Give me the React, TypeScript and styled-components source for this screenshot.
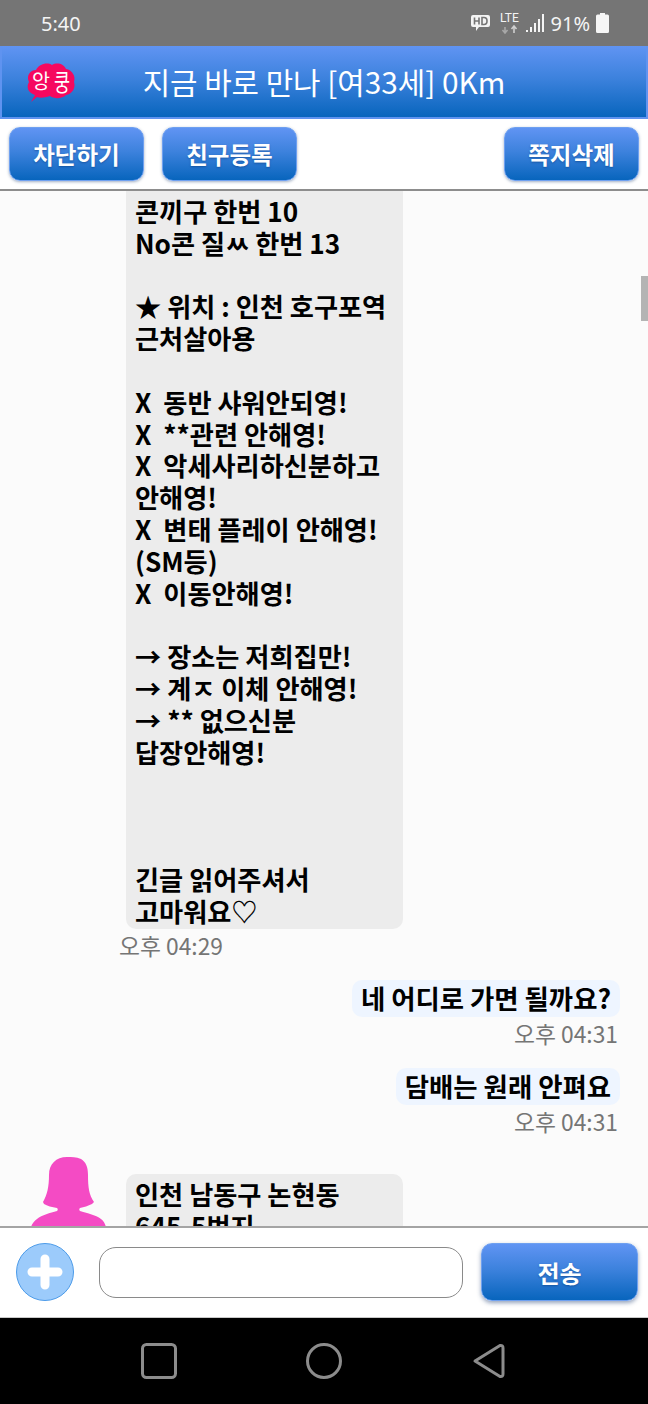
import styled, { createGlobalStyle } from "styled-components";

const GlobalStyle = createGlobalStyle`
  html, body {
    margin: 0;
    padding: 0;
    background: #000;
  }
  * {
    box-sizing: border-box;
  }
`;

const FONT = `"Noto Sans CJK KR", "Noto Sans", sans-serif`;
const BLUE = "linear-gradient(180deg, #6094f3 0%, #3d82dd 45%, #0865bd 100%)";

const Screen = styled.div`
  width: 648px;
  height: 1404px;
  display: flex;
  flex-direction: column;
  font-family: ${FONT};
  position: relative;
  overflow: hidden;
`;

const StatusBar = styled.div`
  height: 46px;
  flex: none;
  background: #757575;
  color: #f4f4f4;
  display: flex;
  align-items: center;
  justify-content: space-between;
  padding: 0 39px 0 41px;
  font-family: "Noto Sans", sans-serif;
  font-size: 20px;
`;

const StatusRight = styled.div`
  display: flex;
  align-items: center;
  gap: 6px;
`;

const Header = styled.div`
  height: 73px;
  flex: none;
  background: ${BLUE};
  border: 2px solid #5f93f0;
  border-top: none;
  display: grid;
  grid-template-columns: 1fr auto 1fr;
  align-items: center;
`;

const LogoWrap = styled.div`
  margin-left: 24px;
  margin-top: 2px;
`;

const Title = styled.div`
  color: #fff;
  font-size: 29.8px;
  line-height: 1;
  white-space: nowrap;
`;

const Toolbar = styled.div`
  height: 72px;
  flex: none;
  background: #fff;
  border-bottom: 2px solid #8d8d8d;
  display: flex;
  align-items: flex-start;
  gap: 18px;
  padding: 8px 9px 0;
`;

const BlueButton = styled.button<{ $right?: boolean }>`
  width: 135px;
  height: 54px;
  flex: none;
  margin-left: ${(p) => (p.$right ? "auto" : "0")};
  padding: 0;
  border: 1px solid #6ea0f0;
  border-radius: 11px;
  background: ${BLUE};
  box-shadow: 0 1px 3px rgba(40, 70, 120, 0.45);
  color: #fff;
  font-family: ${FONT};
  font-size: 23.5px;
  font-weight: 700;
  text-shadow: 0 1px 2px rgba(0, 40, 100, 0.4);
`;

const Chat = styled.div`
  flex: 1;
  min-height: 0;
  overflow: hidden;
  background: #fbfbfb;
  position: relative;
`;

const ScrollThumb = styled.div`
  position: absolute;
  top: 85px;
  right: 0;
  width: 7px;
  height: 45px;
  background: #b4b4b4;
`;

const LeftRow = styled.div`
  display: flex;
  align-items: flex-start;
  padding-left: 126px;
`;

const AvatarRow = styled.div`
  display: flex;
  align-items: flex-start;
  gap: 20px;
  padding-left: 30px;
  margin-top: 20px;
`;

const RightRow = styled.div`
  display: flex;
  justify-content: flex-end;
  padding-right: 28px;
  margin-top: 19px;
`;

const Bubble = styled.div<{ $clipped?: boolean; $offset?: number }>`
  width: 277px;
  flex: none;
  background: #ececec;
  border-radius: ${(p) => (p.$clipped ? "0 0 10px 10px" : "10px")};
  padding: ${(p) => (p.$clipped ? "5px 9px 2px" : "5px 9px")};
  margin-top: ${(p) => p.$offset ?? 0}px;
  color: #000;
  font-size: 26.2px;
  font-weight: 700;
  line-height: 31.8px;
  white-space: pre;
`;

const SentBubble = styled.div`
  background: #eef5ff;
  border-radius: 10px;
  height: 37px;
  padding: 0 9px;
  color: #000;
  font-size: 26.4px;
  font-weight: 700;
  line-height: 35px;
  white-space: pre;
`;

const Time = styled.div<{ $left?: boolean }>`
  color: #757575;
  font-size: 22.8px;
  line-height: 31px;
  padding-top: 1px;
  padding-left: ${(p) => (p.$left ? "119px" : "0")};
  padding-right: ${(p) => (p.$left ? "0" : "30px")};
  text-align: ${(p) => (p.$left ? "left" : "right")};
`;

const InputBar = styled.div`
  height: 91px;
  flex: none;
  background: #fff;
  border-top: 2px solid #a4a4a4;
  display: flex;
  align-items: center;
  padding: 0 10px 1px 16px;
`;

const PlusButton = styled.div`
  width: 58px;
  height: 58px;
  flex: none;
  border-radius: 50%;
  background: #9ccbfb;
  border: 1.5px solid #4c9be9;
  display: flex;
  align-items: center;
  justify-content: center;
`;

const MessageInput = styled.input`
  width: 364px;
  height: 51px;
  flex: none;
  margin-left: 25px;
  margin-right: 18px;
  border: 1px solid #8a8a8a;
  border-radius: 17px;
  background: #fff;
  outline: none;
`;

const SendButton = styled(BlueButton)`
  width: 157px;
  height: 58px;
  font-size: 24px;
  box-shadow: 0 2px 4px rgba(40, 70, 120, 0.5);
`;

const NavBar = styled.div`
  height: 87px;
  flex: none;
  background: #000;
  border-top: 1px solid #c9c9c9;
  display: grid;
  grid-template-columns: repeat(3, 165px);
  justify-content: center;
  align-items: center;
  justify-items: center;
`;

const Logo = () => (
  <svg width="50" height="42" viewBox="0 0 50 42" style={{ display: "block" }}>
    <path
      d="M5 40 L9 33 C2 31 0 25 3 20 C0 14 4 8 10 8 C13 2 21 0 26 3 C31 0 38 2 40 7 C46 8 50 14 48 20 C50 26 46 32 40 33 C36 37 28 37 24 34 C18 36 14 36 11 35 Z"
      fill="#f6085f"
    />
    <g fill="#fff" fontFamily={FONT} fontWeight="400">
      <text x="6" y="27" fontSize="20" textLength="18" lengthAdjust="spacingAndGlyphs">
        앙
      </text>
      <text x="28" y="29" fontSize="24" textLength="16" lengthAdjust="spacingAndGlyphs">
        쿵
      </text>
    </g>
  </svg>
);

const HdIcon = () => (
  <svg width="21" height="20" viewBox="0 0 21 20" style={{ marginRight: "3px" }}>
    <path d="M3 2 H18 Q20 2 20 4 V12 Q20 14 18 14 H9 L6 18 V14 H3 Q1 14 1 12 V4 Q1 2 3 2 Z" fill="#f4f4f4" />
    <path d="M4.5 4.5 V11.5 M9 4.5 V11.5 M4.5 8 H9" stroke="#757575" strokeWidth="1.6" fill="none" />
    <path d="M12 4.5 V11.5 H14 Q17 11.5 17 8 Q17 4.5 14 4.5 Z" stroke="#757575" strokeWidth="1.6" fill="none" />
  </svg>
);

const LteIcon = () => (
  <svg width="20" height="24" viewBox="0 0 20 24">
    <text x="0" y="11" fill="#f4f4f4" fontFamily="Roboto, sans-serif" fontSize="12">
      LTE
    </text>
    <path d="M5 22 V16 M2.5 19 L5 22 L7.5 19" stroke="#a8a8a8" strokeWidth="1.6" fill="none" />
    <path d="M14 22 V15 M11.5 18 L14 15 L16.5 18" stroke="#cfcfcf" strokeWidth="1.6" fill="none" />
  </svg>
);

const SignalIcon = () => (
  <svg width="19" height="20" viewBox="0 0 19 20">
    <path
      d="M0 19 h2 v-2 h-2 Z M4 19 h2 v-5 h-2 Z M8 19 h2 v-9 h-2 Z M12 19 h2 v-13 h-2 Z M16 19 h2 v-18 h-2 Z"
      fill="#f4f4f4"
    />
  </svg>
);

const BatteryIcon = () => (
  <svg width="13" height="20" viewBox="0 0 13 20">
    <path d="M4 0 H9 V1.5 H11.5 Q13 1.5 13 3 V18.5 Q13 20 11.5 20 H1.5 Q0 20 0 18.5 V3 Q0 1.5 1.5 1.5 H4 Z" fill="#f6f6f6" />
  </svg>
);

const Avatar = () => (
  <svg width="76" height="70" viewBox="0 0 76 70" style={{ flex: "none", display: "block" }}>
    <path
      d="M37 0 C42 0 46 0 51 2 C56 5 58 10 58 18 C58 30 59 38 64 45 L62 47 C58 49 54 50 50 51 C49 52 49 53 50 54 C56 56 66 58 71 62 C74 64 75 67 76 70 H1 C2 67 4 64 7 62 C12 58 20 56 27 54 C28 53 28 52 27 51 C22 50 17 49 14 47 L13 45 C17 38 19 30 19 18 C19 7 26 0 37 0 Z"
      fill="#f44bc4"
    />
  </svg>
);

const PlusIcon = () => (
  <svg width="36" height="36" viewBox="0 0 36 36">
    <path d="M18 5 V31 M5 18 H31" stroke="#fff" strokeWidth="9" strokeLinecap="round" fill="none" />
  </svg>
);

const NavSquare = () => (
  <svg width="36" height="36" viewBox="0 0 36 36">
    <rect x="1.5" y="1.5" width="33" height="33" rx="4" stroke="#8c8c8c" strokeWidth="3" fill="none" />
  </svg>
);

const NavCircle = () => (
  <svg width="36" height="36" viewBox="0 0 36 36">
    <circle cx="18" cy="18" r="16.5" stroke="#8c8c8c" strokeWidth="3" fill="none" />
  </svg>
);

const NavBack = () => (
  <svg width="34" height="36" viewBox="0 0 34 36">
    <path d="M3 18 L28 2.5 Q31 2 31 5 V31 Q31 34 28 33.5 Z" stroke="#8c8c8c" strokeWidth="3" strokeLinejoin="round" fill="none" />
  </svg>
);

const firstMessage = `콘끼구 한번 10
No콘 질ㅆ 한번 13

★ 위치 : 인천 호구포역
근처살아용

X  동반 샤워안되영!
X  **관련 안해영!
X  악세사리하신분하고
안해영!
X  변태 플레이 안해영!
(SM등)
X  이동안해영!

→ 장소는 저희집만!
→ 계ㅈ 이체 안해영!
→ ** 없으신분
답장안해영!



긴글 읽어주셔서
고마워요♡`;

const App = () => {
  return (
    <Screen>
      <GlobalStyle />
      <StatusBar>
        <span>5:40</span>
        <StatusRight>
          <HdIcon />
          <LteIcon />
          <SignalIcon />
          <span>91%</span>
          <BatteryIcon />
        </StatusRight>
      </StatusBar>
      <Header>
        <LogoWrap>
          <Logo />
        </LogoWrap>
        <Title>지금 바로 만나 [여33세] 0Km</Title>
      </Header>
      <Toolbar>
        <BlueButton>차단하기</BlueButton>
        <BlueButton>친구등록</BlueButton>
        <BlueButton $right>쪽지삭제</BlueButton>
      </Toolbar>
      <Chat>
        <ScrollThumb />
        <LeftRow>
          <Bubble $clipped>{firstMessage}</Bubble>
        </LeftRow>
        <Time $left>오후 04:29</Time>
        <RightRow>
          <SentBubble>네 어디로 가면 될까요?</SentBubble>
        </RightRow>
        <Time>오후 04:31</Time>
        <RightRow>
          <SentBubble>담배는 원래 안펴요</SentBubble>
        </RightRow>
        <Time>오후 04:31</Time>
        <AvatarRow>
          <Avatar />
          <Bubble $offset={17}>{"인천 남동구 논현동\n645-5번지"}</Bubble>
        </AvatarRow>
      </Chat>
      <InputBar>
        <PlusButton>
          <PlusIcon />
        </PlusButton>
        <MessageInput />
        <SendButton>전송</SendButton>
      </InputBar>
      <NavBar>
        <NavSquare />
        <NavCircle />
        <NavBack />
      </NavBar>
    </Screen>
  );
};

export default App;
